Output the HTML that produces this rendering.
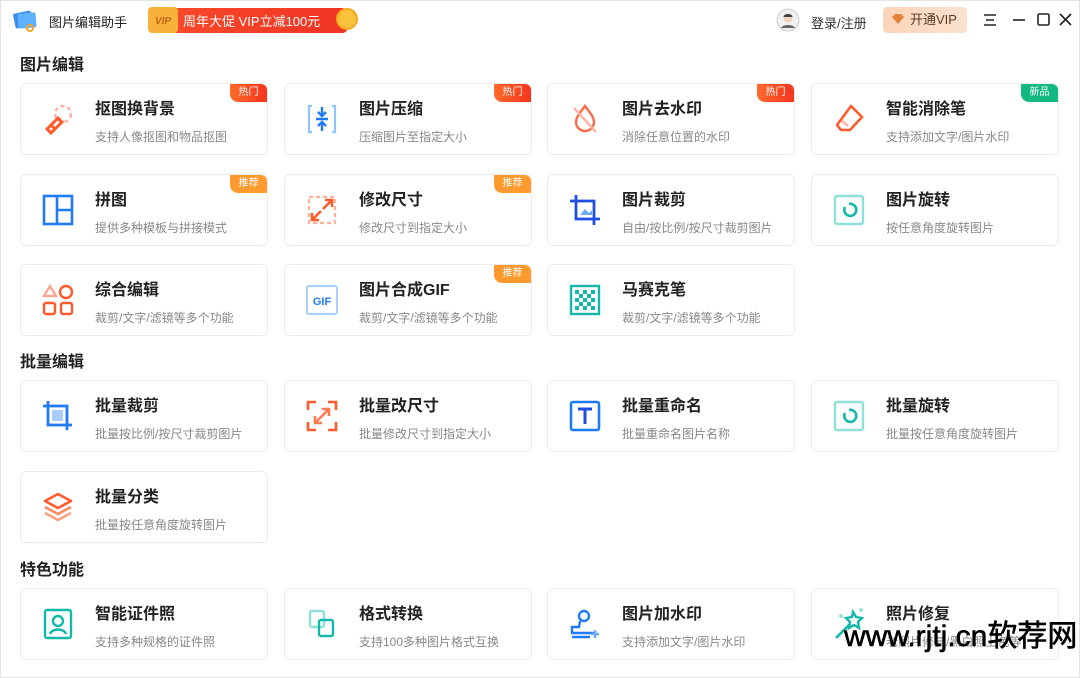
<!DOCTYPE html><html><head><meta charset="utf-8"><style>
*{margin:0;padding:0;box-sizing:border-box}
body{width:1080px;height:678px;background:#fff;font-family:"Liberation Sans","Noto Sans CJK SC",sans-serif;position:relative;overflow:hidden;box-shadow:inset 0 0 0 1px #e4e4e4}
.abs{position:absolute}
.sec{position:absolute;left:20px;font-size:16px;font-weight:bold;color:#222}
.card{position:absolute;width:248px;height:72px;border:1px solid #ececec;border-radius:6px;background:#fff;overflow:hidden}
.card .t{position:absolute;left:74px;top:11px;font-size:16px;font-weight:bold;color:#222}
.card .s{position:absolute;left:74px;top:44px;font-size:12px;color:#888}
.card svg{position:absolute;left:19px;top:17px;width:36px;height:36px}
.b{position:absolute;right:0;top:0;width:37px;height:18px;border-radius:0 6px 0 8px;color:#fff;font-size:10px;text-align:center;line-height:18px}
.hot{background:linear-gradient(90deg,#ff6a2a,#f5341e)}
.rec{background:#ff9a2e}
.new{background:#13b982}
</style></head><body>
<svg class="abs" style="left:12px;top:8px" width="26" height="24" viewBox="0 0 26 24"><rect x="2" y="4" width="18" height="15" rx="2" fill="#3a8bf0" transform="rotate(-12 11 11)"/><rect x="6" y="5" width="18" height="15" rx="2" fill="#5fb0ff" transform="rotate(-4 15 12)"/><circle cx="18" cy="20" r="3" fill="none" stroke="#f5a623" stroke-width="2"/></svg>
<div class="abs" style="left:49px;top:12px;font-size:13px;color:#222">图片编辑助手</div>
<div class="abs" style="left:153px;top:8px;width:195px;height:25px;border-radius:6px;background:linear-gradient(90deg,#f94a2a,#ef3524)"></div>
<div class="abs" style="left:148px;top:7px;width:30px;height:26px;background:#f8b23a;border-radius:4px;color:#c0681a;font-size:10px;font-weight:bold;text-align:center;line-height:30px;font-style:italic">VIP</div>
<div class="abs" style="left:183px;top:11px;font-size:13px;color:#fff">周年大促 VIP立减100元</div>
<div class="abs" style="left:336px;top:8px;width:22px;height:22px;border-radius:50%;background:#f8c23a;border:2px solid #f3a81e"></div>
<svg class="abs" style="left:776px;top:8px" width="24" height="24"><circle cx="12" cy="12" r="11" fill="#eef0f3" stroke="#ccc"/><circle cx="12" cy="10" r="4.5" fill="#f1d1b6"/><path d="M5 20c2-4 12-4 14 0" fill="#666"/><path d="M7.5 9c0-4 9-4 9 0" fill="#444"/></svg>
<div class="abs" style="left:811px;top:13px;font-size:13px;color:#333">登录/注册</div>
<div class="abs" style="left:883px;top:7px;width:84px;height:26px;border-radius:4px;background:linear-gradient(90deg,#fcd4b7,#fbe2d0);font-size:13px;color:#5a3a22;line-height:26px;padding-left:27px">开通VIP</div>
<svg class="abs" style="left:890px;top:12px" width="16" height="16"><path d="M2 5l3-3h6l3 3-6 7z" fill="#e0823a"/></svg>
<svg class="abs" style="left:982px;top:12px" width="90" height="16" fill="none" stroke="#222" stroke-width="1.6"><path d="M2 3h12M4 8h8M2 13h12"/><path d="M31 8h12"/><rect x="56" y="2" width="11" height="11" rx="1.5"/><path d="M78 2l11 11M89 2L78 13"/></svg>

<div class="sec" style="top:51px">图片编辑</div>
<div class="sec" style="top:348px">批量编辑</div>
<div class="sec" style="top:556px">特色功能</div>

<div class="card" style="left:20px;top:83px"><svg viewBox="0 0 36 36"><circle cx="23" cy="13" r="8" fill="none" stroke="#ffb3a0" stroke-width="2.4" stroke-dasharray="4 3"/><path d="M7 28l11-11 4 4-11 11z" fill="none" stroke="#ff5a2c" stroke-width="3"/><path d="M11 24l4 4" stroke="#ff5a2c" stroke-width="3"/></svg><div class="t">抠图换背景</div><div class="s">支持人像抠图和物品抠图</div><div class="b hot">热门</div></div>
<div class="card" style="left:284px;top:83px"><svg viewBox="0 0 36 36"><path d="M8 5H5v26h3M28 5h3v26h-3" fill="none" stroke="#8fc4ff" stroke-width="2.2"/><path d="M18 6v9M14 11l4 4 4-4M12 18h12M18 30v-8M14 25l4-4 4 4" fill="none" stroke="#1f7bf2" stroke-width="2.4"/></svg><div class="t">图片压缩</div><div class="s">压缩图片至指定大小</div><div class="b hot">热门</div></div>
<div class="card" style="left:547px;top:83px"><svg viewBox="0 0 36 36"><path d="M18 5c-5 7-9 11-9 16a9 9 0 0018 0c0-5-4-9-9-16z" fill="none" stroke="#ff6a4a" stroke-width="2.4"/><path d="M7 7l22 24" stroke="#ffb0a0" stroke-width="2.4"/></svg><div class="t">图片去水印</div><div class="s">消除任意位置的水印</div><div class="b hot">热门</div></div>
<div class="card" style="left:811px;top:83px"><svg viewBox="0 0 36 36"><path d="M20 5l11 11-12 13H10l-4-5z" fill="none" stroke="#ff5a2c" stroke-width="2.6" stroke-linejoin="round"/><path d="M11 20l6 5" stroke="#ffb0a0" stroke-width="2.4"/></svg><div class="t">智能消除笔</div><div class="s">支持添加文字/图片水印</div><div class="b new">新品</div></div>
<div class="card" style="left:20px;top:174px"><svg viewBox="0 0 36 36"><rect x="4" y="4" width="28" height="28" fill="none" stroke="#1f7bf2" stroke-width="2.6"/><path d="M17 4v28M17 18h15" stroke="#1f7bf2" stroke-width="2.6"/></svg><div class="t">拼图</div><div class="s">提供多种模板与拼接模式</div><div class="b rec">推荐</div></div>
<div class="card" style="left:284px;top:174px"><svg viewBox="0 0 36 36"><path d="M5 5h26v26H5z" fill="none" stroke="#ffb09a" stroke-width="2.2" stroke-dasharray="4 3"/><path d="M8 28l9-9M8 21v7h7M28 8l-9 9M21 8h7v7" fill="none" stroke="#ff5a2c" stroke-width="2.6"/></svg><div class="t">修改尺寸</div><div class="s">修改尺寸到指定大小</div><div class="b rec">推荐</div></div>
<div class="card" style="left:547px;top:174px"><svg viewBox="0 0 36 36"><path d="M9 3v24h24M3 9h24v24" fill="none" stroke="#1f4fe0" stroke-width="2.8"/><path d="M13 23l5-6 4 4 3-3v5z" fill="#6fa8ff"/></svg><div class="t">图片裁剪</div><div class="s">自由/按比例/按尺寸裁剪图片</div></div>
<div class="card" style="left:811px;top:174px"><svg viewBox="0 0 36 36"><rect x="4" y="4" width="28" height="28" rx="2" fill="none" stroke="#8ee0d8" stroke-width="2.4"/><path d="M14 15a6 6 0 1 0 4-3" fill="none" stroke="#13b9a8" stroke-width="2.6"/></svg><div class="t">图片旋转</div><div class="s">按任意角度旋转图片</div></div>
<div class="card" style="left:20px;top:264px"><svg viewBox="0 0 36 36" fill="none" stroke="#ff5a2c" stroke-width="2.4"><path d="M10 4l6 10H4z" stroke="#ffa890"/><circle cx="26" cy="10" r="6"/><rect x="4" y="21" width="11" height="11" rx="2"/><rect x="21" y="21" width="11" height="11" rx="2"/></svg><div class="t">综合编辑</div><div class="s">裁剪/文字/滤镜等多个功能</div></div>
<div class="card" style="left:284px;top:264px"><svg viewBox="0 0 36 36"><rect x="3" y="4" width="30" height="28" rx="2" fill="none" stroke="#a8d0ff" stroke-width="2"/><text x="18" y="23" font-size="11" font-weight="bold" fill="#1f7bf2" text-anchor="middle" font-family="Liberation Sans">GIF</text></svg><div class="t">图片合成GIF</div><div class="s">裁剪/文字/滤镜等多个功能</div><div class="b rec">推荐</div></div>
<div class="card" style="left:547px;top:264px"><svg viewBox="0 0 36 36"><rect x="4" y="4" width="28" height="28" fill="none" stroke="#13b9a8" stroke-width="2.4"/><g fill="#13b9a8"><rect x="8" y="8" width="4" height="4"/><rect x="16" y="8" width="4" height="4"/><rect x="24" y="8" width="4" height="4"/><rect x="12" y="12" width="4" height="4"/><rect x="20" y="12" width="4" height="4"/><rect x="8" y="16" width="4" height="4"/><rect x="16" y="16" width="4" height="4"/><rect x="24" y="16" width="4" height="4"/><rect x="12" y="20" width="4" height="4"/><rect x="20" y="20" width="4" height="4"/><rect x="8" y="24" width="4" height="4"/><rect x="16" y="24" width="4" height="4"/><rect x="24" y="24" width="4" height="4"/></g></svg><div class="t">马赛克笔</div><div class="s">裁剪/文字/滤镜等多个功能</div></div>
<div class="card" style="left:20px;top:380px"><svg viewBox="0 0 36 36"><path d="M8 3v24h24M3 8h24v24" fill="none" stroke="#1f7bf2" stroke-width="2.8"/><rect x="12" y="12" width="11" height="11" fill="#a8ceff"/></svg><div class="t">批量裁剪</div><div class="s">批量按比例/按尺寸裁剪图片</div></div>
<div class="card" style="left:284px;top:380px"><svg viewBox="0 0 36 36" fill="none" stroke="#ff5a2c" stroke-width="2.6"><path d="M4 12V4h8M24 4h8v8M32 24v8h-8M12 32H4v-8"/><path d="M11 25l14-14M11 18v7h7M25 18v-7h-7" stroke="#ff7a50"/></svg><div class="t">批量改尺寸</div><div class="s">批量修改尺寸到指定大小</div></div>
<div class="card" style="left:547px;top:380px"><svg viewBox="0 0 36 36"><rect x="4" y="4" width="28" height="28" rx="2" fill="none" stroke="#1f7bf2" stroke-width="2.6"/><path d="M11 11h14M18 11v15" stroke="#1f4fe0" stroke-width="3"/></svg><div class="t">批量重命名</div><div class="s">批量重命名图片名称</div></div>
<div class="card" style="left:811px;top:380px"><svg viewBox="0 0 36 36"><rect x="4" y="4" width="28" height="28" rx="2" fill="none" stroke="#8ee0d8" stroke-width="2.4"/><path d="M14 15a6 6 0 1 0 4-3" fill="none" stroke="#13b9a8" stroke-width="2.6"/></svg><div class="t">批量旋转</div><div class="s">批量按任意角度旋转图片</div></div>
<div class="card" style="left:20px;top:471px"><svg viewBox="0 0 36 36" fill="none" stroke="#ff5a2c" stroke-width="2.6" stroke-linejoin="round"><path d="M18 5l13 7-13 7-13-7z"/><path d="M5 18l13 7 13-7" stroke="#ff8a60"/><path d="M5 24l13 7 13-7" stroke="#ffa080"/></svg><div class="t">批量分类</div><div class="s">批量按任意角度旋转图片</div></div>
<div class="card" style="left:20px;top:588px"><svg viewBox="0 0 36 36"><rect x="5" y="4" width="26" height="28" rx="2" fill="none" stroke="#13b9a8" stroke-width="2.4"/><circle cx="18" cy="15" r="5" fill="none" stroke="#13b9a8" stroke-width="2.4"/><path d="M10 28c2-6 14-6 16 0" fill="none" stroke="#13b9a8" stroke-width="2.4"/></svg><div class="t">智能证件照</div><div class="s">支持多种规格的证件照</div></div>
<div class="card" style="left:284px;top:588px"><svg viewBox="0 0 36 36" fill="none" stroke-width="2.4"><rect x="6" y="5" width="14" height="16" rx="2" stroke="#8ee0d8"/><rect x="15" y="14" width="14" height="16" rx="2" stroke="#13b9a8"/></svg><div class="t">格式转换</div><div class="s">支持100多种图片格式互换</div></div>
<div class="card" style="left:547px;top:588px"><svg viewBox="0 0 36 36" fill="none" stroke="#1f7bf2" stroke-width="2.4"><circle cx="17" cy="10" r="5"/><path d="M13 15l-1 6H5v6h24"/><path d="M5 31h18" /><path d="M28 24v8M24 28h8" stroke="#6fa8ff"/></svg><div class="t">图片加水印</div><div class="s">支持添加文字/图片水印</div></div>
<div class="card" style="left:811px;top:588px"><svg viewBox="0 0 36 36"><path d="M5 32l14-14" stroke="#13b9a8" stroke-width="2.6"/><path d="M22 6l3 5 6 1-4 4 1 6-5-3-5 3 1-6-4-4 6-1z" fill="none" stroke="#13b9a8" stroke-width="2.4"/><path d="M10 8v4M8 10h4M30 2v4M28 4h4" stroke="#8ee0d8" stroke-width="1.8"/></svg><div class="t">照片修复</div><div class="s">老照片修复/黑白照上色等</div></div>
<div class="abs" style="left:844px;top:611px;font-size:30px;color:#000;white-space:nowrap;-webkit-text-stroke:0.6px #000">www.rjtj.cn软荐网</div>
</body></html>
